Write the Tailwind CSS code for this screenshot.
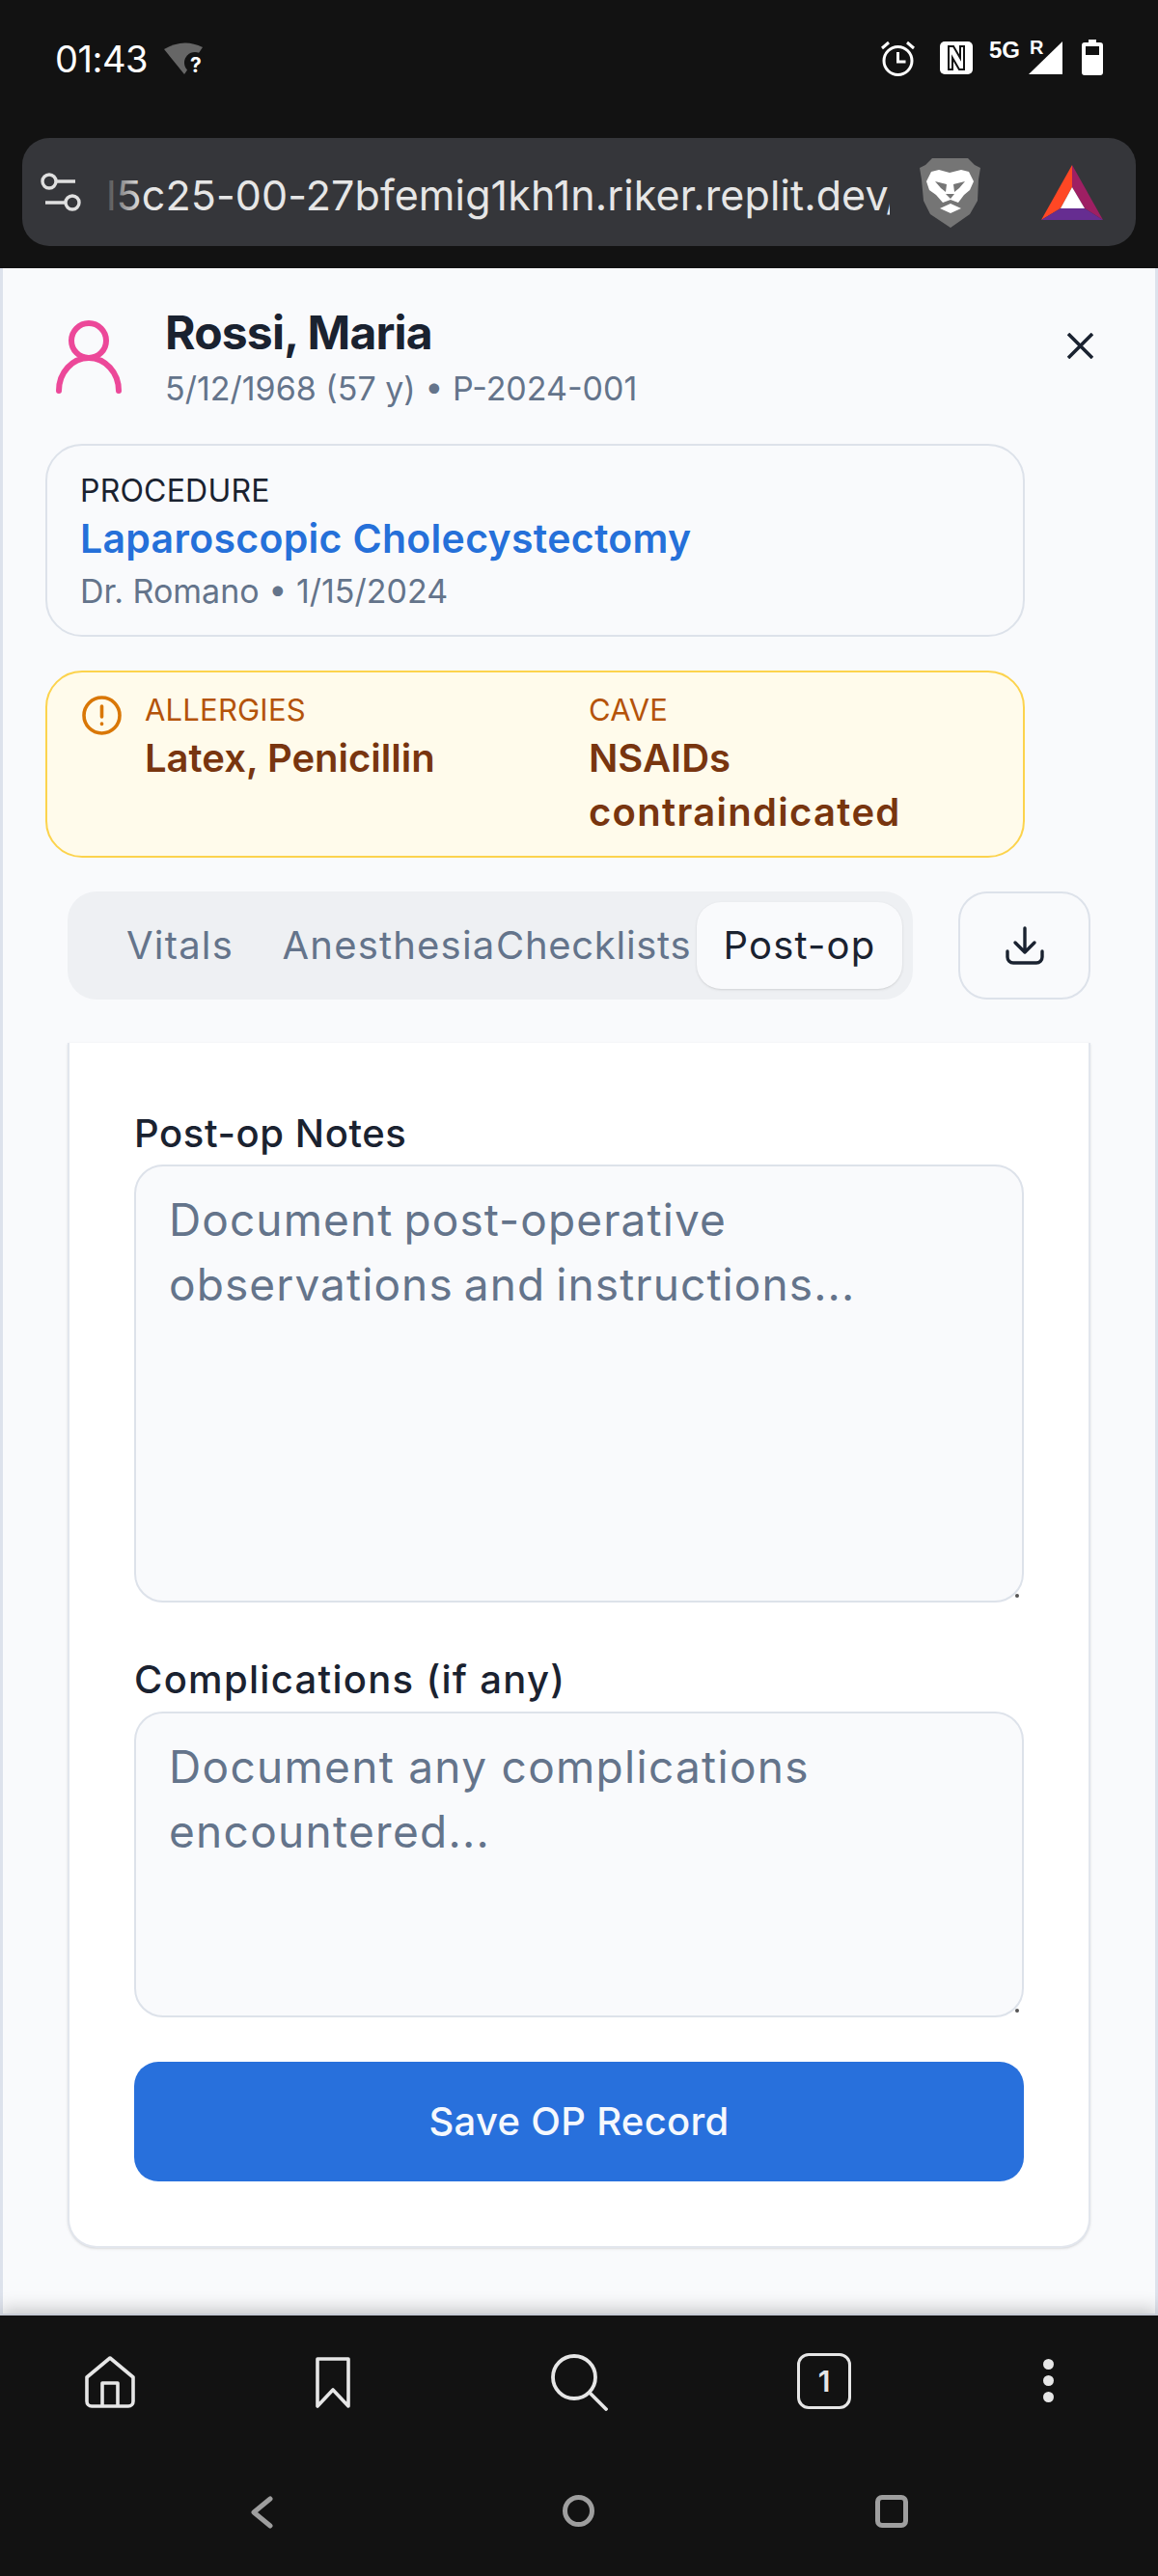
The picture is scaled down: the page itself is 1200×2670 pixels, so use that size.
<!DOCTYPE html>
<html lang="en">
<head>
    <meta charset="UTF-8">
    <meta name="viewport" content="width=device-width, initial-scale=1.0">
    <title>Rossi, Maria</title>
    <script src="https://cdn.jsdelivr.net/npm/@tailwindcss/browser@4"></script>
</head>
<body class="w-[1200px] h-[2670px] overflow-hidden flex flex-col bg-[#121212] font-[family-name:Inter,sans-serif]">

    <!-- Status bar + address bar -->
    <header class="h-[278px] shrink-0 bg-[#121212] px-[23px] flex flex-col">
        <div class="h-[143px] pt-[41px] flex justify-between items-start">
            <div class="flex items-center gap-[17px] pl-[34px] h-[40px]">
                <span class="text-white text-[38px] leading-[40px] tracking-[-0.5px]">01:43</span>
                <svg class="w-[42px] h-[36px]" viewBox="0 0 42 36"><path d="M0 8 Q20 -4 40 6 L21 34 Z" fill="#666"/><circle cx="32" cy="22" r="11" fill="#121212"/><text x="27" y="32" font-size="21" font-weight="700" fill="#fff" font-family="Inter">?</text></svg>
            </div>
            <div class="relative -mt-[3px] h-[40px] w-[300px]">
                <svg class="absolute left-[35px] top-[4px] w-[37px] h-[37px]" viewBox="0 0 37 37" fill="none" stroke="#fff" stroke-width="3"><circle cx="18.5" cy="21" r="14.5"/><path d="M18.5 12v10h8M2 8l7-6M35 8l-7-6"/></svg>
                <svg class="absolute left-[97px] top-[5px] w-[34px] h-[34px]" viewBox="0 0 34 34"><rect width="34" height="34" rx="5" fill="#fff"/><path d="M9 5h5l7 12v-12h4v24h-5l-7-12v12H9z" fill="none" stroke="#121212" stroke-width="2"/></svg>
                <span class="absolute left-[148px] top-[2px] text-white text-[24px] leading-[24px] font-bold font-[family-name:'Liberation_Sans',sans-serif]">5G</span>
                <svg class="absolute left-[189px] top-[5px] w-[35px] h-[34px]" viewBox="0 0 35 34"><path d="M35 0V34H0Z" fill="#fff"/></svg>
                <span class="absolute left-[190px] top-[1px] text-white text-[20px] leading-[20px] font-bold font-[family-name:'Liberation_Sans',sans-serif]">R</span>
                <svg class="absolute left-[244px] top-[3px] w-[22px] h-[37px]" viewBox="0 0 22 37"><path d="M7 0h8v3h4a3 3 0 0 1 3 3v28a3 3 0 0 1-3 3H3a3 3 0 0 1-3-3V6a3 3 0 0 1 3-3h4z" fill="#fff"/><rect x="4" y="7" width="14" height="9" fill="#121212"/></svg>
            </div>
        </div>
        <div class="h-[112px] w-[1154px] rounded-[28px] bg-[#35363a] flex items-center relative">
            <svg class="absolute left-[18px] top-[36px] w-[44px] h-[40px]" viewBox="0 0 44 40" fill="none" stroke="#e0e0e0" stroke-width="3.4"><circle cx="10" cy="9" r="7"/><circle cx="34" cy="31" r="7"/><path d="M17 9h20M6 31h21"/></svg>
            <div class="absolute left-[90px] top-[30px] w-[809px] h-[58px] overflow-hidden flex items-center">
                <span class="-ml-[3px] text-[#e6e6e6] text-[43px] leading-[58px] whitespace-nowrap tracking-[0.1px]">l5c25-00-27bfemig1kh1n.riker.replit.dev/</span>
                <div class="absolute left-0 top-0 w-[34px] h-full bg-gradient-to-r from-[#35363a]/80 to-transparent"></div>
            </div>
            <!-- Brave -->
            <svg class="absolute left-[930px] top-[21px] w-[63px] h-[72px]" viewBox="0 0 63 72">
                <path d="M13 0H50L57 7 63 10 61 22 60 44 52 58 32 72 11 58 4 44 2 22 0 10 6 7Z" fill="#757575"/>
                <path d="M12 14 20 12 31 15 43 12 51 14 56 24 52 33 46 38 40 46 32 43 24 46 17 38 10 33 7 24Z" fill="#fff"/>
                <path d="M16 24 28 27 27 35 22 31ZM47 24 35 27 36 35 41 31ZM27 37 36 37 32 42Z" fill="#757575"/>
                <path d="M21 52 32 47 43 52 32 57Z" fill="#fff"/>
            </svg>
            <!-- BAT -->
            <svg class="absolute left-[1056px] top-[28px] w-[64px] h-[57px]" viewBox="0 0 64 57">
                <path d="M32 0 0 57 20 45 32 23Z" fill="#ff4724"/>
                <path d="M32 0 64 57 45 45 32 23Z" fill="#9e1f63"/>
                <path d="M0 57H64L45 45H20Z" fill="#662d91"/>
                <path d="M32 23 45 45H20Z" fill="#fff"/>
            </svg>
        </div>
    </header>

    <!-- Patient panel -->
    <main class="h-[2120px] shrink-0 overflow-hidden bg-[#f9fafc] border-x-[3px] border-[#dde2ec] flex flex-col">
        <div class="h-[182px] shrink-0 relative flex pl-[55px] pt-[54px] gap-[45px]">
            <svg class="w-[68px] h-[76px] shrink-0" viewBox="0 0 68 76" fill="none" stroke="#ec4899" stroke-width="6" stroke-linecap="round"><circle cx="34" cy="21" r="18"/><path d="M3 73C3 54 17 39 34 39s31 15 31 34"/></svg>
            <div class="-mt-[20px] pt-[3px]">
                <h1 class="text-[#1a2230] text-[48px] leading-[60px] font-bold tracking-[-0.8px]">Rossi, Maria</h1>
                <p class="mt-[3px] text-[#64748b] text-[34px] leading-[50px]">5/12/1968 (57 y) • P-2024-001</p>
            </div>
            <svg class="absolute left-[1103px] top-[67px] w-[27px] h-[27px]" viewBox="0 0 27 27" fill="none" stroke="#1a2230" stroke-width="3.6"><path d="M1 1l25 25M26 1L1 26"/></svg>
        </div>

        <section class="ml-[44px] w-[1015px] h-[200px] shrink-0 border-[2px] border-[#dde2ea] rounded-[38px] px-[34px] pt-[24px]">
            <div class="text-[#1a2230] text-[32px] leading-[45px] tracking-[0.2px]">PROCEDURE</div>
            <div class="text-[#2570d9] text-[41px] leading-[55px] font-semibold tracking-[0.3px]">Laparoscopic Cholecystectomy</div>
            <div class="text-[#64748b] text-[34px] leading-[54px]">Dr. Romano • 1/15/2024</div>
        </section>

        <section class="ml-[44px] mt-[35px] w-[1015px] h-[194px] shrink-0 border-[2px] border-[#fcd34d] bg-[#fffbeb] rounded-[38px] flex pl-[36px] pt-[24px]">
            <svg class="w-[41px] h-[41px] shrink-0" viewBox="0 0 41 41" fill="none" stroke="#d97706" stroke-width="3.6" stroke-linecap="round"><circle cx="20.5" cy="20.5" r="18.5"/><path d="M20.5 11v11M20.5 29v.5"/></svg>
            <div class="ml-[24px] w-[460px]">
                <div class="text-[#b45309] text-[31px] leading-[34px] -mt-[2px] tracking-[0.2px]">ALLERGIES</div>
                <div class="text-[#78350f] text-[40px] leading-[56px] font-semibold mt-[5px]">Latex, Penicillin</div>
            </div>
            <div>
                <div class="text-[#b45309] text-[31px] leading-[34px] -mt-[2px] tracking-[0.2px]">CAVE</div>
                <div class="text-[#78350f] text-[40px] leading-[56px] font-semibold mt-[5px]">NSAIDs<br><span class="tracking-[1.3px]">contraindicated</span></div>
            </div>
        </section>

        <div class="ml-[67px] mt-[35px] h-[112px] shrink-0 flex gap-[47px]">
            <nav class="w-[876px] rounded-[30px] bg-[#eef0f3] flex items-center pl-[11px] text-[#64748b] text-[40px]">
                <span class="w-[211px] text-center tracking-[1.2px]">Vitals</span>
                <span class="w-[222px] text-center tracking-[1.2px]">Anesthesia</span>
                <span class="w-[208px] text-left tracking-[0.7px]">Checklists</span>
                <span class="w-[213px] h-[90px] bg-[#f9fafc] rounded-[25px] shadow-sm text-[#1a2230] flex items-center justify-center tracking-[1.2px]">Post-op</span>
            </nav>
            <button class="w-[137px] h-[112px] rounded-[30px] border-[2px] border-[#dde2ea] flex items-center justify-center">
                <svg class="w-[40px] h-[40px]" viewBox="0 0 40 40" fill="none" stroke="#1a2230" stroke-width="3.4" stroke-linecap="round" stroke-linejoin="round"><path d="M20 2v25M10 17l10 10 10-10M2 26v6a6 6 0 0 0 6 6h24a6 6 0 0 0 6-6v-6"/></svg>
            </button>
        </div>

        <div class="ml-[67px] mt-[45px] w-[1060px] h-[1249px] shrink-0 bg-white border-x-[2px] border-b-[2px] border-[#e2e6ed] rounded-b-[30px] shadow-sm px-[67px] pt-[71px]">
            <label class="block text-[#1a2230] text-[40px] leading-[46px] mb-[9px] font-medium tracking-[0.6px]">Post-op Notes</label>
            <div class="relative">
                <textarea class="block w-full h-[454px] resize-none rounded-[30px] border-[2px] border-[#dde2ea] bg-[#f9fafc] px-[34px] py-[22px] text-[46px] leading-[67px] tracking-[1.1px] [word-spacing:-3px] placeholder:text-[#64748b]" placeholder="Document post-operative observations and instructions..."></textarea>
                <div class="absolute right-[5px] bottom-[5px] w-[4px] h-[4px] bg-[#555] rounded-full"></div>
            </div>
            <label class="block text-[#1a2230] text-[40px] leading-[46px] mt-[57px] mb-[10px] font-medium tracking-[1.3px]">Complications (if any)</label>
            <div class="relative">
                <textarea class="block w-full h-[317px] resize-none rounded-[30px] border-[2px] border-[#dde2ea] bg-[#f9fafc] px-[34px] py-[22px] text-[46px] leading-[67px] tracking-[1.3px] placeholder:text-[#64748b]" placeholder="Document any complications encountered..."></textarea>
                <div class="absolute right-[5px] bottom-[5px] w-[4px] h-[4px] bg-[#555] rounded-full"></div>
            </div>
            <button class="mt-[46px] w-full h-[124px] rounded-[25px] bg-[#2870dc] text-[#f5f8fd] text-[40px] font-medium tracking-[0.3px]">Save OP Record</button>
        </div>
    </main>

    <!-- Browser toolbar -->
    <footer class="relative h-[272px] shrink-0 bg-[#121212] border-t-[2px] border-[#c8ccd6] shadow-[0_-6px_16px_rgba(0,0,0,0.18)]">
        <svg class="absolute left-[88px] top-[42px] w-[52px] h-[54px]" viewBox="0 0 52 54" fill="none" stroke="#e6e6e6" stroke-width="3.6" stroke-linejoin="round"><path d="M2 22 26 2l24 20v25a5 5 0 0 1-5 5H7a5 5 0 0 1-5-5zM18 52V28h16v24"/></svg>
        <svg class="absolute left-[327px] top-[43px] w-[36px] h-[53px]" viewBox="0 0 36 53" fill="none" stroke="#e6e6e6" stroke-width="3.6" stroke-linejoin="round"><path d="M2 2h32v49L18 34 2 51z"/></svg>
        <svg class="absolute left-[570px] top-[39px] w-[60px] h-[60px]" viewBox="0 0 60 60" fill="none" stroke="#e6e6e6" stroke-width="3.8" stroke-linecap="round"><circle cx="25" cy="25" r="22"/><path d="M41 41l17 17"/></svg>
        <div class="absolute left-[826px] top-[39px] w-[56px] h-[58px] rounded-[12px] border-[3.5px] border-[#e6e6e6] flex items-center justify-center text-[#e6e6e6] text-[30px] font-semibold">1</div>
        <div class="absolute left-[1081px] top-[45px] flex flex-col gap-[6px]">
            <div class="w-[11px] h-[11px] rounded-full bg-[#e6e6e6]"></div>
            <div class="w-[11px] h-[11px] rounded-full bg-[#e6e6e6]"></div>
            <div class="w-[11px] h-[11px] rounded-full bg-[#e6e6e6]"></div>
        </div>
        <svg class="absolute left-[258px] top-[187px] w-[26px] h-[34px]" viewBox="0 0 26 34" fill="none" stroke="#9e9e9e" stroke-width="5" stroke-linecap="round" stroke-linejoin="round"><path d="M22 3 5 17l17 14"/></svg>
        <div class="absolute left-[583px] top-[186px] w-[33px] h-[33px] rounded-full border-[5px] border-[#9e9e9e]"></div>
        <div class="absolute left-[907px] top-[186px] w-[34px] h-[34px] rounded-[7px] border-[5px] border-[#9e9e9e]"></div>
    </footer>

</body>
</html>
